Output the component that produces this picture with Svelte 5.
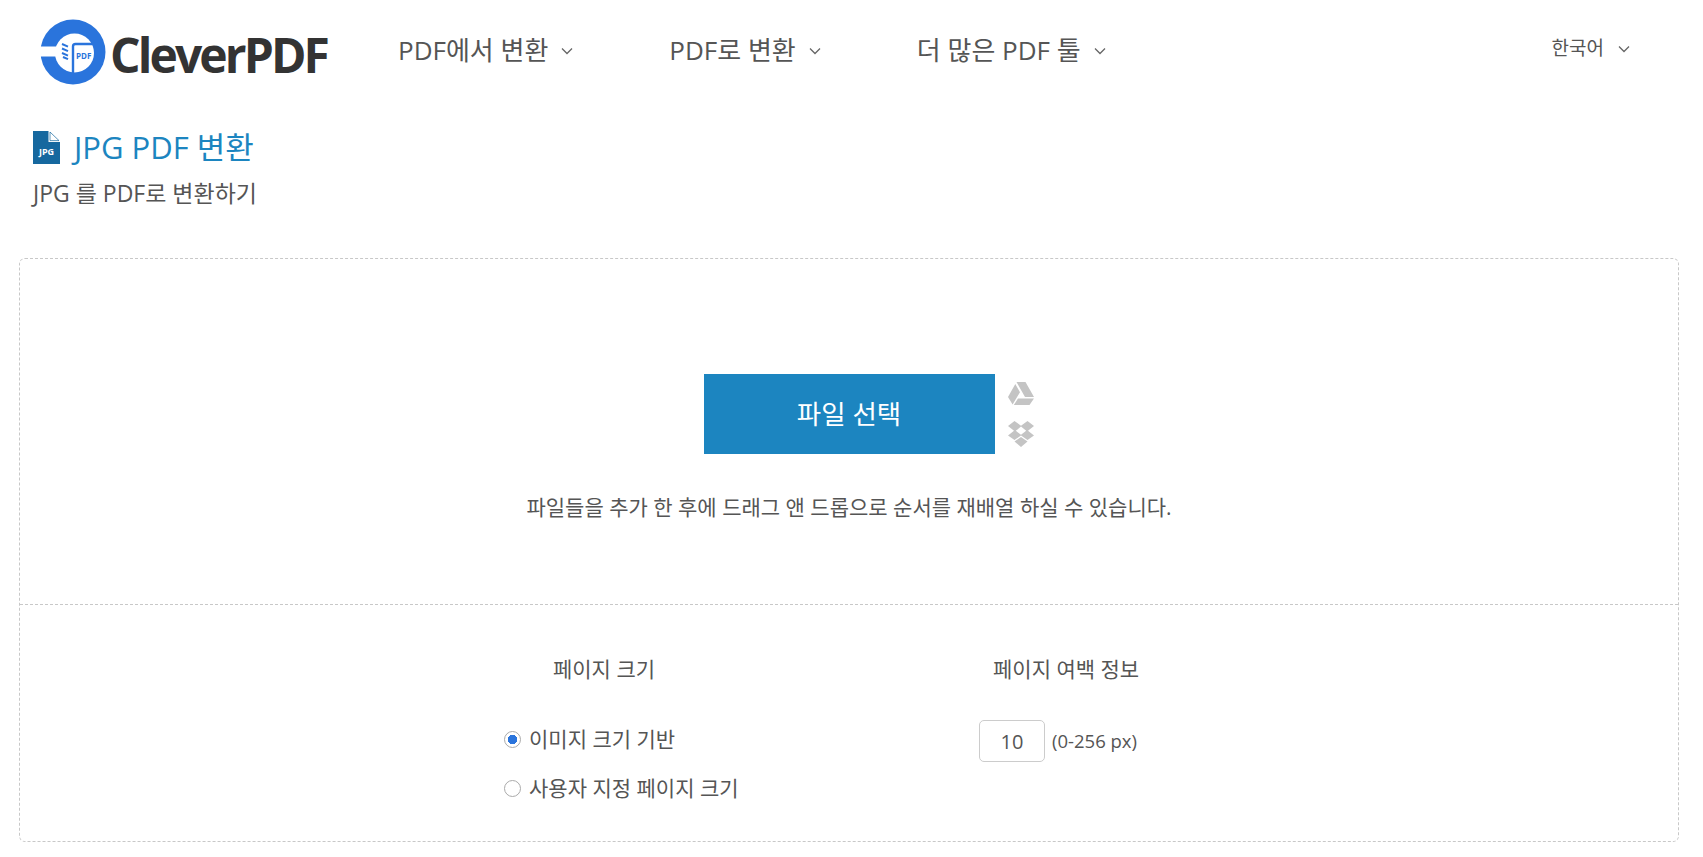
<script>
  // CleverPDF "JPG to PDF" tool page: header, title, upload box with page options.
  const nav = ['PDF에서 변환', 'PDF로 변환', '더 많은 PDF 툴'];
  let sizeMode = $state('image');
  let margin = $state(10);
</script>

<header class="top">
  <a class="logo" href="#home">
    <svg class="mark" viewBox="0 0 66 66" width="66" height="66" aria-hidden="true">
      <circle cx="33" cy="33" r="32.5" fill="#2a74dc" />
      <circle cx="34.5" cy="34" r="19.5" fill="#fff" />
      <rect x="0" y="27.5" width="20" height="10" fill="#fff" />
      <path d="M33 55V27.5q0-2.5 2.5-2.5H56" stroke="#2a74dc" stroke-width="2.4" fill="none" />
      <path d="M22 25l6 2.6M22 29.5l6 2.6M22 34l6 2.6M23 38l5 2.2" stroke="#2a74dc" stroke-width="2" fill="none" />
      <text x="36" y="40" class="pdf">PDF</text>
    </svg>
    <span class="word">CleverPDF</span>
  </a>
  <nav class="menu">
    {#each nav as item}
      <button type="button" class="nav-item">
        {item}
        <svg class="chev" viewBox="0 0 12 8" width="12" height="8"><path d="M1 1.5l5 5 5-5" /></svg>
      </button>
    {/each}
  </nav>
  <button type="button" class="lang">
    한국어
    <svg class="chev" viewBox="0 0 12 8" width="12" height="8"><path d="M1 1.5l5 5 5-5" /></svg>
  </button>
</header>

<section class="head">
  <h1>
    <svg viewBox="0 0 27 33" width="27" height="33" aria-hidden="true">
      <path d="M0 0h15.5v11H27v22H0z" fill="#16689f" />
      <path d="M17 1l9 8.6h-9z" fill="#fff" stroke="#16689f" stroke-width="0.7" />
      <text x="13.5" y="23.5" class="jpg">JPG</text>
    </svg>
    JPG PDF 변환
  </h1>
  <p>JPG 를 PDF로 변환하기</p>
</section>

<main class="box">
  <div class="upload">
    <div class="pick">
      <button type="button" class="choose">파일 선택</button>
      <div class="clouds">
        <svg viewBox="0 0 26 23" width="26" height="23" aria-hidden="true">
          <path d="M8.5 0h9L26 15h-9zM7.3 2L12 10.2 4.6 22.5 0 15zM10 16.5h16L21.5 23H5.8z" fill="#c4c4c4" />
        </svg>
        <svg viewBox="0 0 26 26" width="26" height="26" aria-hidden="true">
          <path d="M6.5 0L13 4.8 19.5 0 26 5l-6 4.8 6 4.8-6.5 4.4L13 14.4 6.5 19 0 14.6l6-4.8L0 5zM13 5.6L7.8 9.8l5.2 3.9 5.2-3.9zM6.5 20.4L13 16l6.5 4.4L13 26z" fill="#c4c4c4" />
        </svg>
      </div>
    </div>
    <p class="hint">파일들을 추가 한 후에 드래그 앤 드롭으로 순서를 재배열 하실 수 있습니다.</p>
  </div>
  <div class="options">
    <div class="opt size">
      <h2>페이지 크기</h2>
      <label class="radio">
        <input type="radio" bind:group={sizeMode} value="image" />
        이미지 크기 기반
      </label>
      <label class="radio">
        <input type="radio" bind:group={sizeMode} value="custom" />
        사용자 지정 페이지 크기
      </label>
    </div>
    <div class="opt margin">
      <h2>페이지 여백 정보</h2>
      <div class="margin-row">
        <input type="text" class="num" bind:value={margin} />
        <span>(0-256 px)</span>
      </div>
    </div>
  </div>
</main>

<style>
  :global(body) {
    background: #fff;
    color: #555;
    font-family: 'Open Sans', 'Noto Sans CJK KR', sans-serif;
  }
  button {
    border: 0;
    background: transparent;
    padding: 0;
    font: inherit;
    color: inherit;
    cursor: pointer;
  }
  .top {
    display: flex;
    align-items: center;
    height: 104px;
    padding: 0 73px 0 40px;
  }
  .logo {
    display: flex;
    align-items: center;
    gap: 4px;
    text-decoration: none;
  }
  .mark {
    flex: none;
  }
  .pdf {
    font-family: 'Open Sans', sans-serif;
    font-size: 8px;
    font-weight: 700;
    fill: #2a74dc;
  }
  .word {
    font-size: 48px;
    font-weight: 700;
    letter-spacing: -2.9px;
    color: #333;
    line-height: 1;
    margin-top: 6px;
  }
  .menu {
    display: flex;
    gap: 96px;
    margin-left: 71px;
    margin-top: -6px;
  }
  .nav-item {
    display: flex;
    align-items: center;
    gap: 13px;
    font-size: 26px;
    color: #555;
  }
  .chev {
    fill: none;
    stroke: #666;
    stroke-width: 1.3;
    margin-top: 3px;
  }
  .lang {
    display: flex;
    align-items: center;
    gap: 14px;
    margin-left: auto;
    margin-top: -10px;
    font-size: 19px;
    color: #555;
  }
  .head {
    padding: 0 33px;
  }
  h1 {
    display: flex;
    align-items: center;
    gap: 14px;
    margin: 26px 0 0;
    font-size: 31px;
    font-weight: 400;
    line-height: 34px;
    color: #1c85c0;
  }
  .jpg {
    font-family: 'Open Sans', sans-serif;
    font-size: 9px;
    font-weight: 700;
    fill: #fff;
    text-anchor: middle;
  }
  .head p {
    margin: 13px 0 0;
    font-size: 23px;
    line-height: 32px;
    color: #555;
  }
  .box {
    margin: 49px 24px 0 19px;
    height: 584px;
    box-sizing: border-box;
    border: 1px dashed #c8c8c8;
    border-radius: 6px;
  }
  .upload {
    display: flex;
    flex-direction: column;
    align-items: center;
    height: 346px;
    box-sizing: border-box;
    padding-top: 115px;
    border-bottom: 1px dashed #c8c8c8;
  }
  .pick {
    position: relative;
  }
  .choose {
    display: block;
    width: 291px;
    height: 80px;
    padding-bottom: 3px;
    background: #1c85c0;
    color: #fff;
    font-size: 26.5px;
  }
  .clouds {
    position: absolute;
    left: 304px;
    top: 8px;
    display: flex;
    flex-direction: column;
    gap: 16px;
  }
  .clouds svg {
    display: block;
  }
  .hint {
    margin: 37px 0 0;
    font-size: 21px;
    line-height: 32px;
    color: #555;
  }
  .options {
    display: flex;
    padding: 44px 0 0 484px;
  }
  h2 {
    margin: 0;
    font-size: 21px;
    font-weight: 400;
    line-height: 40px;
    color: #555;
    text-align: center;
  }
  .size {
    width: 200px;
    margin-right: 275px;
  }
  .radio {
    display: flex;
    align-items: center;
    gap: 8px;
    font-size: 21px;
    line-height: 40px;
    white-space: nowrap;
    margin-bottom: 9px;
  }
  .size h2 {
    margin-bottom: 30px;
  }
  .radio input {
    flex: none;
    appearance: none;
    width: 17px;
    height: 17px;
    margin: 1px 0 0;
    border: 1px solid #aaa;
    border-radius: 50%;
    background: #fff;
  }
  .radio input:checked {
    background: radial-gradient(circle, #2a74dc 0 4.5px, #fff 5px);
  }
  .margin {
    width: 160px;
  }
  .margin h2 {
    margin: 0 0 31px 14px;
    text-align: left;
    white-space: nowrap;
  }
  .margin-row {
    display: flex;
    align-items: center;
    gap: 7px;
    font-size: 18.5px;
    white-space: nowrap;
  }
  .margin-row span {
    margin-top: -2px;
  }
  .num {
    width: 66px;
    height: 42px;
    box-sizing: border-box;
    border: 1px solid #ccc;
    border-radius: 5px;
    font: inherit;
    font-size: 20px;
    color: #555;
    text-align: center;
    outline: none;
  }
</style>
